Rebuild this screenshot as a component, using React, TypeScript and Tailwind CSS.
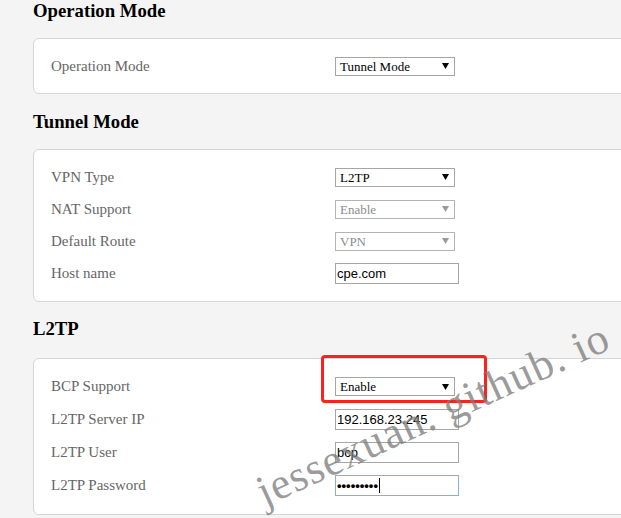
import React from "react"

function Select({ value, disabled = false }: { value: string; disabled?: boolean }) {
  return (
    <div
      className={`flex items-center justify-between w-[120px] h-[19px] border bg-white pl-[4px] pr-[5px] text-[13px] leading-none ${
        disabled ? "border-[#b4b4b4] text-[#8c8c8c]" : "border-[#a6a6a6] text-black"
      }`}
    >
      <span>{value}</span>
      <svg width="7" height="6" viewBox="0 0 7 6">
        <polygon points="0,0 7,0 3.5,6" fill={disabled ? "#9a9a9a" : "#000"} />
      </svg>
    </div>
  )
}

function Input({ value, focused = false, password = false }: { value: string; focused?: boolean; password?: boolean }) {
  return (
    <div
      className={`flex items-center w-[124px] h-[21px] border bg-white px-[1px] text-[13px] leading-none text-black font-['Liberation_Sans',Arial,sans-serif] ${
        focused ? "border-[#86aee0]" : "border-[#a6a6a6]"
      }`}
    >
      {password ? (
        <>
          <span className="font-bold">•••••••••</span>
          <span className="ml-[1px] w-px h-[15px] bg-black" />
        </>
      ) : (
        <span>{value}</span>
      )}
    </div>
  )
}

function Row({ label, children, h = "h-[32px]" }: { label: string; children: React.ReactNode; h?: string }) {
  return (
    <div className={`flex items-center ${h}`}>
      <div className="w-[284px] text-[15px] text-[#666]">{label}</div>
      {children}
    </div>
  )
}

function Heading({ children, className = "" }: { children: React.ReactNode; className?: string }) {
  return <h3 className={`h-[22px] leading-[22px] text-[18.72px] font-bold text-black ${className}`}>{children}</h3>
}

export default function App() {
  return (
    <div className="relative w-[621px] h-[518px] overflow-hidden bg-[#f4f4f4] font-['Liberation_Serif',serif]">
      <div className="pl-[33px]">
        <Heading>Operation Mode</Heading>
        <div className="mt-[16px] w-[640px] rounded-[6px] border border-[#d6d6d6] bg-white pl-[17px] pt-[11px] pb-[11px]">
          <Row label="Operation Mode">
            <Select value="Tunnel Mode" />
          </Row>
        </div>

        <Heading className="mt-[17px]">Tunnel Mode</Heading>
        <div className="mt-[16px] w-[640px] rounded-[6px] border border-[#d6d6d6] bg-white pl-[17px] pt-[11px] pb-[12px]">
          <Row label="VPN Type">
            <Select value="L2TP" />
          </Row>
          <Row label="NAT Support">
            <Select value="Enable" disabled />
          </Row>
          <Row label="Default Route">
            <Select value="VPN" disabled />
          </Row>
          <Row label="Host name">
            <Input value="cpe.com" />
          </Row>
        </div>

        <Heading className="mt-[16px]">L2TP</Heading>
        <div className="mt-[18px] w-[640px] rounded-[6px] border border-[#d6d6d6] bg-white pl-[17px] pt-[11px] pb-[12px]">
          <Row label="BCP Support" h="h-[33px]">
            <Select value="Enable" />
          </Row>
          <Row label="L2TP Server IP" h="h-[33px]">
            <Input value="192.168.23.245" />
          </Row>
          <Row label="L2TP User" h="h-[33px]">
            <Input value="bcp" />
          </Row>
          <Row label="L2TP Password" h="h-[33px]">
            <Input value="" focused password />
          </Row>
        </div>
      </div>

      {/* highlight box */}
      <div className="absolute left-[321px] top-[355px] w-[166px] h-[48px] rounded-[4px] border-[3px] border-[#ff2020]" />

      {/* watermark */}
      <span className="absolute left-[268px] top-[470px] whitespace-nowrap text-[44px] leading-[44px] tracking-[1px] text-[#7a7a7a]/75 origin-bottom-left -rotate-[24.5deg] pointer-events-none">
        jessexuan. github. io
      </span>
    </div>
  )
}
